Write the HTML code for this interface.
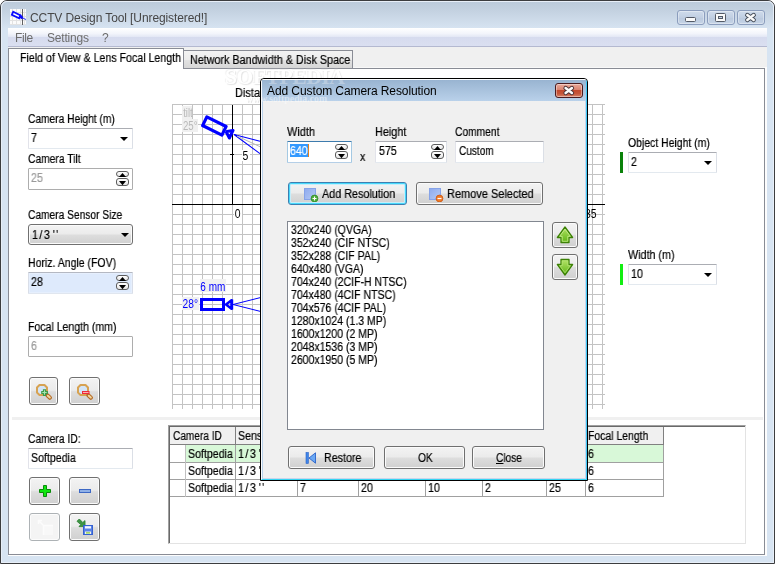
<!DOCTYPE html>
<html><head><meta charset="utf-8"><title>CCTV Design Tool</title>
<style>
html,body{margin:0;padding:0;background:#fff;}
body{width:775px;height:564px;position:relative;overflow:hidden;font-family:"Liberation Sans",sans-serif;font-size:11px;color:#000;}
.a{position:absolute;}
.t{position:absolute;white-space:nowrap;line-height:13px;font-size:12px;color:#000;will-change:transform;-webkit-text-stroke-width:.2px;transform-origin:0 0;transform:scaleX(var(--s,.885));}
.seg{position:absolute;white-space:nowrap;line-height:15px;font-size:12px;will-change:transform;}
.btn{position:absolute;box-sizing:border-box;border:1px solid #707070;border-radius:3px;background:linear-gradient(#f3f3f3 0%,#ebebeb 47%,#dddddd 53%,#d0d0d0 100%);box-shadow:inset 0 0 0 1px #fbfbfb;}
.btn.def{border-color:#3c7fb1;box-shadow:inset 0 0 0 1px #46d8fb,inset 0 0 0 2px #c5eefb;}
.btn.dis{border-color:#adb2b5;background:#f4f4f4;box-shadow:inset 0 0 0 1px #fcfcfc;}
.tb{position:absolute;box-sizing:border-box;background:#fff;border:1px solid #e3e9ef;border-top-color:#abadb3;border-left-color:#e2e3ea;border-right-color:#dbdfe6;border-radius:1px;}
.spu,.spd{position:absolute;box-sizing:border-box;border:1px solid #5c5c5c;border-radius:3px;background:linear-gradient(#fff,#e6e6e6);}
.arr{position:absolute;width:0;height:0;border-left:4px solid transparent;border-right:4px solid transparent;border-top:4px solid #000;}

.cb{box-sizing:border-box;border:1px solid #8b9dbd;border-radius:3px;background:linear-gradient(#cfdbeb,#c1cfe2 50%,#bac9de 52%,#c6d4e6);box-shadow:inset 0 0 0 1px rgba(255,255,255,.35);}
.cl{top:427px;width:1px;height:70px;background:#a0a0a0;border-top:18px solid #808080;box-sizing:border-box;}
</style></head><body>
<!-- main window frame -->
<div class="a" id="win" style="left:0;top:0;width:775px;height:564px;box-sizing:border-box;border:1px solid #3c3d3f;border-radius:7px 7px 0 0;background:#d7e4f2;"></div>
<div class="a" style="left:1px;top:1px;width:773px;height:562px;box-sizing:border-box;border:1px solid #e8eff8;border-radius:6px 6px 0 0;background:linear-gradient(#bccbdb 0px,#c3d1e0 8px,#d7e4f2 27px,#d7e4f2 100%);"></div>
<!-- title -->
<svg class="a" style="left:10px;top:9px" width="16" height="16" viewBox="0 0 16 16">
<rect width="16" height="16" fill="#fbfbfb"/>
<g stroke="#e2e2e2" stroke-width="1"><path d="M0 3.5H16M0 7.5H16M0 11.5H16M0 15.5H16M2.5 0V16M6.5 0V16M10.5 0V16M14.5 0V16"/></g>
<path d="M12.500 0V16" stroke="#606060" stroke-width="1"/>
<g stroke="#0a0aff" fill="none"><path d="M3.200 2.800L10.600 6.400L9.200 9.400L1.800 5.800Z" stroke-width="1.800" fill="#fff"/><path d="M9.5 6.5L12.5 9.3" stroke-width="2.6"/><path d="M12.5 9L16 10.5" stroke-width="0.8"/></g>
</svg>
<div class="seg" id="title" style="left:30px;top:11px;color:#464646;letter-spacing:-0.1px;">CCTV Design Tool [Unregistered!]</div>
<!-- caption buttons -->
<div class="a cb" style="left:677px;top:10px;width:28px;height:15px;"></div>
<div class="a cb" style="left:707px;top:10px;width:28px;height:15px;"></div>
<div class="a cb" style="left:737px;top:10px;width:28px;height:15px;"></div>
<svg class="a" style="left:677px;top:10px" width="88" height="15" viewBox="0 0 88 15">
<rect x="8.5" y="7.5" width="10" height="4" rx="1" fill="#fafafa" stroke="#535a66"/>
<rect x="38.5" y="3.5" width="10" height="8" rx="1" fill="#fafafa" stroke="#535a66"/><rect x="41.5" y="6.5" width="4" height="2" fill="#c6d3e4" stroke="#535a66"/>
<path d="M70.300 5L76.700 10M76.700 5L70.300 10" stroke="#454c58" stroke-width="4.400" stroke-linecap="round" fill="none"/><path d="M70.300 5L76.700 10M76.700 5L70.300 10" stroke="#fafafa" stroke-width="2.500" stroke-linecap="round" fill="none"/>
</svg>
<!-- menu bar -->
<div class="a" style="left:8px;top:28px;width:759px;height:18px;background:linear-gradient(#ffffff 0%,#f3f5fb 30%,#e4e8f5 48%,#d6dbee 52%,#dadff1 100%);"></div>
<div class="a" style="left:8px;top:46px;width:759px;height:1px;background:#b4b9d0;"></div>
<div class="seg" style="left:14.500px;top:31px;color:#6d6d6d;letter-spacing:-0.4px;">File</div>
<div class="seg" style="left:47px;top:31px;color:#6d6d6d;letter-spacing:-0.2px;">Settings</div>
<div class="seg" style="left:102px;top:31px;color:#6d6d6d;">?</div>
<!-- client -->
<div class="a" style="left:8px;top:47px;width:759px;height:509px;background:#f0f0f0;"></div>
<!-- tab pane -->
<div class="a" style="left:184px;top:67px;width:583px;height:1px;background:#f8f8f8;"></div>
<div class="a" style="left:765px;top:67px;width:2px;height:489px;background:#fdfdfd;"></div>
<div class="a" style="left:8px;top:555px;width:759px;height:1px;background:#fdfdfd;"></div>
<div class="a" style="left:8px;top:68px;width:757px;height:487px;box-sizing:border-box;border:1px solid #898c95;background:#fff;"></div>
<div class="a" style="left:183px;top:50px;width:170px;height:19px;box-sizing:border-box;border:1px solid #898c95;border-left:none;background:linear-gradient(#f3f3f3,#ececec 50%,#e2e2e2 52%,#d6d6d6);"></div>
<div class="a" style="left:8px;top:48px;width:176px;height:21px;box-sizing:border-box;border:1px solid #898c95;border-bottom:none;background:#fff;"></div>
<div class="t" id="tab1" style="left:20px;top:52px;">Field of View &amp; Lens Focal Length</div>
<div class="t" id="tab2" style="--s:0.897;left:190px;top:54px;">Network Bandwidth &amp; Disk Space</div>
<!-- splitter -->
<div class="a" style="left:12px;top:417px;width:751px;height:3px;background:#f0f0f0;"></div>
<!-- left panel -->
<div class="t" id="l1" style="--s:0.851;left:28px;top:113px;">Camera Height (m)</div>
<div class="tb" style="left:28px;top:128px;width:105px;height:21px;"></div>
<div class="t" style="left:31px;top:132px;">7</div>
<div class="arr" style="left:120px;top:137px;"></div>
<div class="t" id="l2" style="--s:0.858;left:28px;top:153px;">Camera Tilt</div>
<div class="tb" style="left:28px;top:168px;width:105px;height:22px;border-color:#adadad;"></div>
<div class="t" style="left:31px;top:172px;color:#9a9a9a;">25</div>
<div class="spu" style="left:116px;top:171px;width:13px;height:6px;"></div>
<div class="spd" style="left:116px;top:178px;width:13px;height:8px;"></div>
<svg class="a" style="left:116px;top:171px" width="13" height="15"><path d="M3 6L6.500 2L10 6Z" fill="#000"/><path d="M3 10L6.500 14.200L10 10Z" fill="#000"/></svg>
<div class="t" id="l3" style="--s:0.851;left:28px;top:209px;">Camera Sensor Size</div>
<div class="btn" style="left:28px;top:224px;width:105px;height:21px;"></div>
<div class="t" style="left:32px;top:229px;"><span style="letter-spacing:1.7px">1/3</span><span style="margin-left:1.600px;letter-spacing:1.600px">''</span></div>
<div class="arr" style="left:121px;top:233px;"></div>
<div class="t" id="l4" style="--s:.875;left:28px;top:257px;">Horiz. Angle (FOV)</div>
<div class="tb" style="left:28px;top:272px;width:105px;height:22px;background:#deeafc;border-color:#d9dee8;border-top-color:#b4b8c2;border-bottom-color:#e0e6ef;box-shadow:inset 0 0 0 1px #e6effd;"></div>
<div class="t" style="left:31px;top:276px;">28</div>
<div class="spu" style="left:116px;top:275px;width:13px;height:6px;"></div>
<div class="spd" style="left:116px;top:282px;width:13px;height:8px;"></div>
<svg class="a" style="left:116px;top:275px" width="13" height="15"><path d="M3 6L6.500 2L10 6Z" fill="#000"/><path d="M3 10L6.500 14.200L10 10Z" fill="#000"/></svg>
<div class="t" id="l5" style="--s:.878;left:28px;top:321px;">Focal Length (mm)</div>
<div class="tb" style="left:28px;top:336px;width:105px;height:21px;border-color:#adadad;"></div>
<div class="t" style="left:31px;top:340px;color:#9a9a9a;">6</div>
<div class="btn" style="left:29px;top:377px;width:29px;height:28px;"></div>
<div class="btn" style="left:69px;top:377px;width:31px;height:28px;"></div>
<svg class="a" style="left:29px;top:377px" width="72" height="29" viewBox="0 0 72 29">
<g><path d="M10.500 8h5l2.500 2.500v5l-2.500 2.500h-5l-2.500-2.500v-5z" fill="#d3e5f8" stroke="#d7a252" stroke-width="2" stroke-linejoin="round"/><path d="M18.300 18.300l2.600 2.400" stroke="#b56a25" stroke-width="4.200" stroke-linecap="round"/><path d="M18.800 18.700l2 1.800" stroke="#f1d79f" stroke-width="2" stroke-linecap="round"/><path d="M15.500 12.200v6.700M12.200 15.500h6.700" stroke="#3a9a48" stroke-width="3.200"/><path d="M15.500 13.300v4.400M13.300 15.500h4.400" stroke="#a8e4b0" stroke-width="1.100"/></g>
<g transform="translate(41,0)"><path d="M10.500 8h5l2.500 2.500v5l-2.500 2.500h-5l-2.500-2.500v-5z" fill="#d3e5f8" stroke="#d7a252" stroke-width="2" stroke-linejoin="round"/><path d="M18.300 18.300l2.600 2.400" stroke="#b56a25" stroke-width="4.200" stroke-linecap="round"/><path d="M18.800 18.700l2 1.800" stroke="#f1d79f" stroke-width="2" stroke-linecap="round"/><rect x="12" y="14" width="7.500" height="3" fill="#ee2a3a"/><rect x="13" y="15" width="5.500" height="1" fill="#ffb0b0"/></g>
</svg>
<!-- bottom-left -->
<div class="t" id="l6" style="--s:0.857;left:28px;top:433px;">Camera ID:</div>
<div class="tb" style="left:28px;top:448px;width:105px;height:21px;"></div>
<div class="t" style="left:31px;top:452px;">Softpedia</div>
<div class="btn" style="left:29px;top:477px;width:31px;height:28px;"></div>
<div class="btn" style="left:69px;top:477px;width:31px;height:28px;"></div>
<div class="btn dis" style="left:29px;top:513px;width:31px;height:28px;"></div>
<div class="btn" style="left:69px;top:513px;width:31px;height:28px;"></div>
<svg class="a" style="left:29px;top:477px" width="72" height="64" viewBox="0 0 72 64">
<path d="M14.5 8.5h3v4h4v3h-4v4h-3v-4h-4v-3h4z" fill="#0fe80f" stroke="#0a8a0a" stroke-width="1"/>
<rect x="50.5" y="12.5" width="11" height="3" fill="#8fb0e6" stroke="#3d68c4"/>
<rect x="15" y="49" width="9" height="9" fill="#f8f8f8"/><path d="M9.500 43.500l4.500 4.500M9.500 47v-3.500h3.500M14.500 58V48.500H24" fill="none" stroke="#fcfcfc" stroke-width="1.500"/>
<g transform="translate(40,36)"><path d="M8 8.300L10.300 6L13.800 9.500L16 7.600V13.600H10L11.800 11.600Z" fill="#3f9445" stroke="#2f8436" stroke-width=".9" stroke-linejoin="round"/><rect x="14.500" y="12.500" width="9" height="9" fill="#5b83e6" stroke="#3461d2"/><rect x="16" y="13.200" width="6" height="2.300" fill="#f4f7ff"/><rect x="16" y="18.500" width="6" height="2.500" fill="#f0f4e4"/><rect x="17" y="19.300" width="4" height="1.200" fill="#86cc3a"/></g>
</svg>
<!-- drawing -->
<div class="t" style="left:234.500px;top:87px;--s:.915;">Distance</div>
<svg class="a" id="draw" style="left:172px;top:104px;will-change:transform" width="434" height="306" viewBox="0 0 434 306" font-family="Liberation Sans, sans-serif" font-size="12">
<path d="M0.5 0V305M10.5 0V305M20.5 0V305M30.5 0V305M40.5 0V305M50.5 0V305M60.5 0V305M70.5 0V305M80.5 0V305M90.5 0V305M100.5 0V305M110.5 0V305M120.5 0V305M130.5 0V305M140.5 0V305M150.5 0V305M160.5 0V305M170.5 0V305M180.5 0V305M190.5 0V305M200.5 0V305M210.5 0V305M220.5 0V305M230.5 0V305M240.5 0V305M250.5 0V305M260.5 0V305M270.5 0V305M280.5 0V305M290.5 0V305M300.5 0V305M310.5 0V305M320.5 0V305M330.5 0V305M340.5 0V305M350.5 0V305M360.5 0V305M370.5 0V305M380.5 0V305M390.5 0V305M400.5 0V305M410.5 0V305M420.5 0V305M430.5 0V305M0 0.5H433M0 10.5H433M0 20.5H433M0 30.5H433M0 40.5H433M0 50.5H433M0 60.5H433M0 70.5H433M0 80.5H433M0 90.5H433M0 100.5H433M0 110.5H433M0 120.5H433M0 130.5H433M0 140.5H433M0 150.5H433M0 160.5H433M0 170.5H433M0 180.5H433M0 190.5H433M0 200.5H433M0 210.5H433M0 220.5H433M0 230.5H433M0 240.5H433M0 250.5H433M0 260.5H433M0 270.5H433M0 280.5H433M0 290.5H433M0 300.5H433" stroke="#c3c3c3" stroke-width="1" fill="none"/>
<path d="M60.500 1V100M0 100.500H433M58 50.500H62" stroke="#000" stroke-width="1" fill="none"/>
<rect x="10" y="2" width="10" height="13" fill="#f0f0f0"/><rect x="10" y="15" width="16" height="13" fill="#f0f0f0"/>
<text x="11.200" y="13" fill="#b9b9b9" textLength="9.500" lengthAdjust="spacingAndGlyphs">tilt</text><text x="11" y="26" fill="#b9b9b9" textLength="14.600" lengthAdjust="spacingAndGlyphs">25°</text>
<rect x="70" y="46" width="8" height="11" fill="#fff"/><text x="70.500" y="56" textLength="5.800" lengthAdjust="spacingAndGlyphs">5</text>
<rect x="62" y="104" width="8" height="11" fill="#fff"/><text x="62.800" y="114" textLength="5.800" lengthAdjust="spacingAndGlyphs">0</text>
<text x="413" y="114" textLength="11.600" lengthAdjust="spacingAndGlyphs">35</text>
<!-- camera 1 (side view) -->
<g fill="none" stroke="#0000ff">
<path d="M62 30.500L88 37.300M62 30.500L88 49.600" stroke-width="1.100"/>
<path d="M65 32L88 42.700" stroke="#b8b8b8" stroke-width="1"/>
<g transform="translate(42.600,22.100) rotate(26)"><rect x="-11" y="-4.800" width="21.500" height="9.600" stroke-width="3.200" stroke-linejoin="round"/><path d="M13.500 -0.500L18.500 -4.200V4.200L13.500 0.500Z" stroke-width="3" stroke-linejoin="round"/></g>
</g>
<!-- camera 2 (top view) -->
<rect x="28" y="175" width="26" height="13" fill="#f0f0f0"/><text x="28.300" y="187" fill="#0000ff" textLength="25" lengthAdjust="spacingAndGlyphs">6 mm</text>
<rect x="10" y="193" width="17" height="13" fill="#f0f0f0"/><text x="10.600" y="204" fill="#0000ff" textLength="15.400" lengthAdjust="spacingAndGlyphs">28°</text>
<g fill="none" stroke="#0000ff">
<path d="M61 200.500L88 193.700M61 200.500L88 207.300" stroke-width="1"/>
<rect x="29.500" y="195.500" width="22" height="10" stroke-width="3"/>
<path d="M54 200.500L59.500 196.200V204.800Z" stroke-width="2.400" stroke-linejoin="round"/><path d="M60 195.500V205.500" stroke-width="2.400"/>
</g>
</svg>
<!-- right panel -->
<div class="t" id="r1" style="--s:0.871;left:628px;top:137px;">Object Height (m)</div>
<div class="a" style="left:620px;top:152px;width:3px;height:21px;background:#0a820a;"></div>
<div class="tb" style="left:628px;top:152px;width:89px;height:21px;"></div>
<div class="t" style="left:631px;top:156px;">2</div>
<div class="arr" style="left:704px;top:161px;"></div>
<div class="t" id="r2" style="--s:0.895;left:628px;top:249px;">Width (m)</div>
<div class="a" style="left:620px;top:264px;width:3px;height:21px;background:#12ee12;"></div>
<div class="tb" style="left:628px;top:264px;width:89px;height:21px;"></div>
<div class="t" style="left:631px;top:268px;">10</div>
<div class="arr" style="left:704px;top:273px;"></div>
<!-- table -->
<div class="a" id="grid" style="left:168px;top:425px;width:578px;height:119px;box-sizing:border-box;background:#fff;border:1px solid #a0a0a0;border-right-color:#e3e3e3;border-bottom-color:#e3e3e3;"></div>
<div class="a" style="left:169px;top:426px;width:576px;height:117px;box-sizing:border-box;border-left:1px solid #696969;border-top:1px solid #696969;"></div>
<!-- header -->
<div class="a" style="left:170px;top:427px;width:494px;height:18px;background:#f0f0f0;border-bottom:1px solid #808080;box-sizing:border-box;"></div>
<!-- selected row -->
<div class="a" style="left:186px;top:445px;width:478px;height:17px;background:#d8f8d8;"></div>
<!-- row lines -->
<div class="a" style="left:170px;top:462px;width:494px;height:1px;background:#a0a0a0;"></div>
<div class="a" style="left:170px;top:479px;width:494px;height:1px;background:#a0a0a0;"></div>
<div class="a" style="left:170px;top:496px;width:494px;height:1px;background:#a0a0a0;"></div>
<!-- col lines -->
<div class="a" style="left:185px;top:445px;width:1px;height:52px;background:#c0c0c0;"></div>
<div class="a cl" style="left:235px;"></div><div class="a cl" style="left:297px;"></div><div class="a cl" style="left:358px;"></div><div class="a cl" style="left:425px;"></div><div class="a cl" style="left:482px;"></div><div class="a cl" style="left:546px;"></div><div class="a cl" style="left:585px;"></div><div class="a cl" style="left:663px;"></div>
<div class="t" style="--s:0.842;left:173px;top:430px;">Camera ID</div>
<div class="t" style="left:238px;top:430px;">Sensor Size</div>
<div class="t" style="left:588.300px;top:430px;--s:.87;">Focal Length</div>
<div class="t" style="left:188px;top:448px;">Softpedia</div><div class="t" style="left:237.600px;top:448px;"><span style="letter-spacing:1.7px">1/3</span><span style="margin-left:1.600px;letter-spacing:1.600px">''</span></div><div class="t" style="left:588px;top:448px;">6</div>
<div class="t" style="left:188px;top:465px;">Softpedia</div><div class="t" style="left:237.600px;top:465px;"><span style="letter-spacing:1.7px">1/3</span><span style="margin-left:1.600px;letter-spacing:1.600px">''</span></div><div class="t" style="left:588px;top:465px;">6</div>
<div class="t" style="left:188px;top:482px;">Softpedia</div><div class="t" style="left:237.600px;top:482px;"><span style="letter-spacing:1.7px">1/3</span><span style="margin-left:1.600px;letter-spacing:1.600px">''</span></div><div class="t" style="left:300px;top:482px;">7</div><div class="t" style="left:361px;top:482px;">20</div><div class="t" style="left:428px;top:482px;">10</div><div class="t" style="left:485px;top:482px;">2</div><div class="t" style="left:549px;top:482px;">25</div><div class="t" style="left:588px;top:482px;">6</div>
<!-- watermark -->
<div class="a" style="left:225px;top:65px;font:bold 21.500px/24px 'Liberation Serif',serif;letter-spacing:-0.4px;color:#fff;text-shadow:1px 1px 1px #e2e2e2,-1px -1px 1px #f1f1f1;white-space:nowrap;">SOFTPEDIA</div>
<!-- dialog -->
<div class="a" id="dlg" style="left:260px;top:78px;width:328px;height:403px;box-sizing:border-box;border:1px solid #000;border-radius:4px 4px 0 0;background:#f0f0f0;overflow:hidden;">
<div class="a" style="left:0;top:0;width:326px;height:401px;box-sizing:border-box;border:1px solid #fbfdff;border-right-color:#3fc8f6;border-bottom-color:#34d4f2;border-radius:3px 3px 0 0;"></div>
<div class="a" style="left:1px;top:22px;width:324px;height:378px;box-sizing:border-box;border:1px solid #b9d1ea;border-top:none;border-right-color:#c6d6ec;border-bottom-color:#cad6ec;"></div>
<div class="a" style="left:1px;top:1px;width:324px;height:21px;background:linear-gradient(#99b4d1,#b9d1ea);"></div>
</div>
<div class="a" style="left:262px;top:80px;width:324px;height:12px;overflow:hidden;"><span style="position:absolute;left:-37px;top:-15px;font:bold 21.500px/24px 'Liberation Serif',serif;letter-spacing:-0.4px;color:rgba(255,255,255,.3);white-space:nowrap;">SOFTPEDIA</span></div>
<div class="a" style="left:262px;top:93px;width:80px;height:14px;overflow:hidden;"><span style="position:absolute;left:-16px;top:0;font:bold 9.800px/12px 'Liberation Serif',serif;color:rgba(255,255,255,.45);white-space:nowrap;">www.softpedia.com</span></div>
<div class="a" style="left:245.500px;top:93px;font:bold 9.800px/12px 'Liberation Serif',serif;color:#fff;text-shadow:1px 1px 0 #e6e6e6;white-space:nowrap;width:14px;overflow:hidden;">www.softpedia.com</div>
<div class="seg" id="dtitle" style="left:267px;top:84px;color:#000;letter-spacing:-0.09px;">Add Custom Camera Resolution</div>
<div class="a" style="left:555px;top:83px;width:28px;height:15px;box-sizing:border-box;border:1px solid #4a1b1f;border-radius:3px;background:linear-gradient(#e9a99b 0%,#d98370 45%,#c3492d 50%,#c6563a 75%,#d8846a 100%);box-shadow:inset 0 0 0 1px rgba(255,255,255,.4);"></div>
<svg class="a" style="left:555px;top:83px" width="28" height="15" viewBox="0 0 28 15"><path d="M10.600 5L16.900 10M16.900 5L10.600 10" stroke="#4b3236" stroke-width="4.400" stroke-linecap="round" fill="none"/><path d="M10.600 5L16.900 10M16.900 5L10.600 10" stroke="#fbfbfb" stroke-width="2.500" stroke-linecap="round" fill="none"/></svg>
<div class="t" id="d1" style="--s:0.914;left:287px;top:126px;">Width</div>
<div class="t" id="d2" style="--s:0.903;left:375px;top:126px;">Height</div>
<div class="t" id="d3" style="--s:0.854;left:455px;top:126px;">Comment</div>
<div class="tb" style="left:287px;top:141px;width:65px;height:22px;border-color:#b5cfe7;border-top-color:#3d7bad;border-left-color:#a4c9e3;border-right-color:#a4c9e3;"></div>
<div class="a" style="left:290px;top:144px;width:18px;height:13px;background:#3399ff;"></div><div class="a" style="left:308px;top:144px;width:1px;height:13px;background:#e08020;"></div>
<div class="t" style="left:290px;top:145px;color:#fff;">640</div>
<div class="spu" style="left:335px;top:144px;width:13px;height:6px;"></div><div class="spd" style="left:335px;top:151px;width:13px;height:8px;"></div>
<svg class="a" style="left:335px;top:144px" width="13" height="15"><path d="M3 6L6.500 2L10 6Z" fill="#000"/><path d="M3 10L6.500 14.200L10 10Z" fill="#000"/></svg>
<div class="t" style="left:360px;top:151px;">x</div>
<div class="tb" style="left:375px;top:141px;width:72px;height:22px;"></div>
<div class="t" style="left:379px;top:145px;">575</div>
<div class="spu" style="left:431px;top:144px;width:13px;height:6px;"></div><div class="spd" style="left:431px;top:151px;width:13px;height:8px;"></div>
<svg class="a" style="left:431px;top:144px" width="13" height="15"><path d="M3 6L6.500 2L10 6Z" fill="#000"/><path d="M3 10L6.500 14.200L10 10Z" fill="#000"/></svg>
<div class="tb" style="left:455px;top:141px;width:89px;height:22px;"></div>
<div class="t" style="--s:0.838;left:459px;top:145px;">Custom</div>
<div class="btn def" style="left:288px;top:182px;width:119px;height:23px;"></div>
<div class="btn" style="left:416px;top:182px;width:127px;height:23px;"></div>
<svg class="a" style="left:304px;top:188px" width="140" height="14" viewBox="0 0 140 14">
<defs><linearGradient id="bq" x1="0" y1="0" x2="1" y2="1"><stop offset="0" stop-color="#8eaaee"/><stop offset="1" stop-color="#b6caf5"/></linearGradient></defs>
<rect x="0.500" y="0.500" width="11" height="11" fill="url(#bq)" stroke="#86a3e8"/><circle cx="10.500" cy="10.500" r="3.400" fill="#4fae3c" stroke="#2f8a25" stroke-width=".8"/><path d="M10.500 8.500v4M8.500 10.500h4" stroke="#fff" stroke-width="1.100"/>
<rect x="125.500" y="0.500" width="11" height="11" fill="url(#bq)" stroke="#86a3e8"/><circle cx="135.500" cy="10.500" r="3.400" fill="#f07a28" stroke="#c8560f" stroke-width=".8"/><path d="M133.500 10.500h4" stroke="#fff" stroke-width="1.200"/>
</svg>
<div class="t" id="b1" style="--s:0.9;left:322px;top:188px;">Add Resolution</div>
<div class="t" id="b2" style="--s:0.916;left:447px;top:188px;">Remove Selected</div>
<!-- listbox -->
<div class="tb" style="left:287px;top:221px;width:257px;height:209px;border-color:#828790;border-radius:0;"></div>
<div class="t" id="lb" style="--s:0.876;left:291px;top:224px;line-height:13px;">320x240 (QVGA)<br>352x240 (CIF NTSC)<br>352x288 (CIF PAL)<br>640x480 (VGA)<br>704x240 (2CIF-H NTSC)<br>704x480 (4CIF NTSC)<br>704x576 (4CIF PAL)<br>1280x1024 (1.3 MP)<br>1600x1200 (2 MP)<br>2048x1536 (3 MP)<br>2600x1950 (5 MP)</div>
<div class="btn" style="left:552px;top:222px;width:26px;height:26px;"></div>
<div class="btn" style="left:552px;top:254px;width:26px;height:26px;"></div>
<svg class="a" style="left:552px;top:222px" width="26" height="58" viewBox="0 0 26 58">
<defs><linearGradient id="gu" x1="0" y1="0" x2="0" y2="1"><stop offset="0" stop-color="#b6e46a"/><stop offset="1" stop-color="#5cb312"/></linearGradient></defs>
<path d="M13 5L20.600 15.500H17V20.500H9V15.500H5.400Z" fill="url(#gu)" stroke="#3d8206" stroke-width="1.300" stroke-linejoin="round"/>
<path d="M13 53L20.600 42.500H17V37.500H9V42.500H5.400Z" fill="url(#gu)" stroke="#3d8206" stroke-width="1.300" stroke-linejoin="round"/>
<path d="M13 7.200L18.300 14.300H15.800V19.300H10.200V14.300H7.700Z" fill="none" stroke="#cdf094" stroke-width="1" stroke-linejoin="round" opacity=".8"/><path d="M13 50.800L18.300 43.700H15.800V38.700H10.200V43.700H7.700Z" fill="none" stroke="#b7e67a" stroke-width="1" stroke-linejoin="round" opacity=".7"/>
</svg>
<!-- bottom buttons -->
<div class="btn" style="left:288px;top:446px;width:87px;height:23px;"></div>
<div class="btn" style="left:384px;top:446px;width:81px;height:23px;"></div>
<div class="btn" style="left:472px;top:446px;width:73px;height:23px;"></div>
<svg class="a" style="left:305px;top:452px" width="12" height="12" viewBox="0 0 12 12"><rect x="1" y="0.500" width="2.400" height="11" fill="#3f86e8" stroke="#2a62c8" stroke-width=".6"/><path d="M10.500 0.800V11.200L4 6Z" fill="#6aa8f4" stroke="#2a62c8" stroke-width=".9" stroke-linejoin="round"/></svg>
<div class="t" id="b3" style="--s:0.892;left:324px;top:452px;">Restore</div>
<div class="t" id="b4" style="--s:0.85;left:418px;top:452px;">OK</div>
<div class="t" id="b5" style="--s:0.846;left:496px;top:452px;"><u>C</u>lose</div>
</body></html>
